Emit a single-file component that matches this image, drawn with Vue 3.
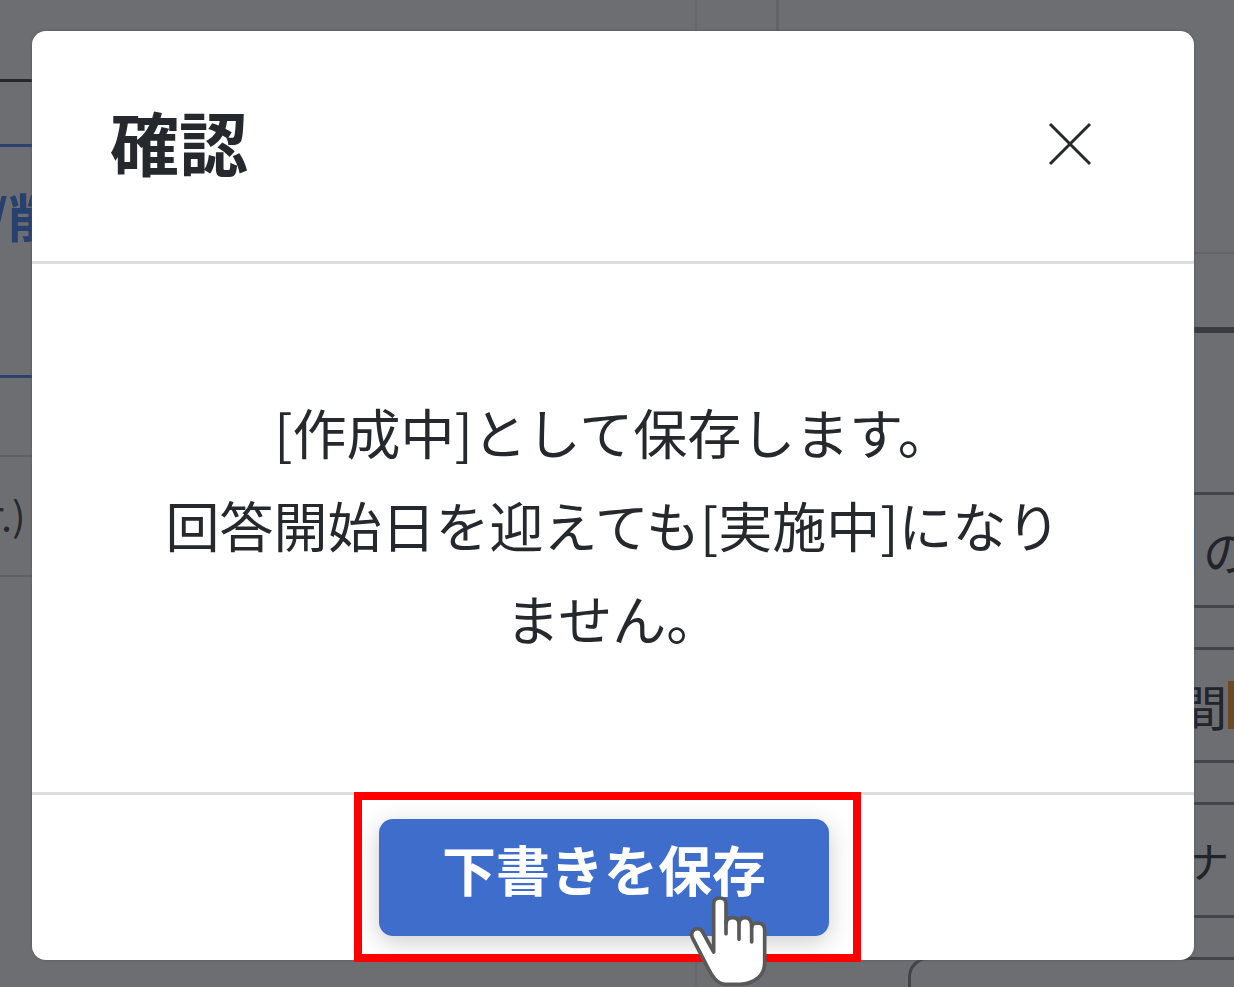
<script setup>
import { ref } from 'vue'

const open = ref(true)
const fields = [
  { id: 'f1', label: '項目1', value: 'の', kind: 'marked' },
  { id: 'f2', label: '項目2', value: '間', kind: 'inset' },
  { id: 'f3', label: '項目3', value: 'ナ', kind: 'small' },
  { id: 'f4', label: '項目4', value: '', kind: 'plain' },
]
</script>

<template>
  <div class="stage">
    <div class="backdrop" aria-hidden="true" inert>
      <div class="side">
        <div class="row row-top"></div>
        <div class="row row-tab"></div>
        <div class="row row-edit"><span>/削</span></div>
        <div class="row row-gap"></div>
        <div class="row row-note"><span>r.)</span></div>
      </div>
      <div class="gutter"></div>
      <div class="panel">
        <div class="panel-head"></div>
        <div class="panel-bar"></div>
        <div class="fields">
          <div v-for="f in fields" :key="f.id" class="field" :class="f.kind">
            <input :id="f.id" type="text" :value="f.value" :aria-label="f.label" readonly />
          </div>
        </div>
      </div>
    </div>

    <section v-if="open" class="dialog" role="dialog" aria-modal="true" aria-labelledby="dialog-title">
      <header class="dialog-head">
        <h1 id="dialog-title">確認</h1>
        <button class="close" type="button" aria-label="閉じる" @click="open = false">
          <svg viewBox="0 0 44 44" width="44" height="44">
            <path d="M2 2 42 42M42 2 2 42" fill="none" stroke="#25282c" stroke-width="3" />
          </svg>
        </button>
      </header>
      <div class="dialog-body">
        <p>[作成中]として保存します。<br />回答開始日を迎えても[実施中]になりません。</p>
      </div>
      <footer class="dialog-foot">
        <div class="action">
          <button class="save" type="button">下書きを保存</button>
          <div class="frame"></div>
          <svg class="pointer" viewBox="264 342 240 276" width="80" height="92" aria-hidden="true">
            <path
              d="M341 516V372Q341 354 359 354Q378 354 378 372V430Q379 413 398 413Q416 413 417 430Q418 413 436 413Q455 413 455 440Q458 429 475 429Q494 430 494 450V548Q494 576 474 594Q452 612 420 613H374Q357 611 344 596Q335 585 326 568L277 473Q271 455 284 448Q299 442 308 456Z"
              fill="#fff" stroke="#595959" stroke-width="11" stroke-linejoin="round" />
            <path d="M378 425V461M417 425V478M455 435V486" fill="none" stroke="#595959" stroke-width="11" stroke-linecap="round" />
          </svg>
        </div>
      </footer>
    </section>
  </div>
</template>

<style>
body {
  margin: 0;
  background: #6d6e72;
}
</style>

<style scoped>
* {
  box-sizing: border-box;
}

.stage {
  display: grid;
  grid-template: minmax(100vh, auto) / minmax(0, 1fr);
  overflow: hidden;
  background: #6d6e72;
  color: #25282c;
  font-family: "Noto Sans CJK JP", "Noto Sans", sans-serif;
}

.backdrop,
.dialog {
  grid-area: 1 / 1;
}

/* dimmed page behind the dialog */
.backdrop {
  display: grid;
  grid-template-columns: minmax(0, 1fr) 81px 458px;
  height: 100vh;
  overflow: hidden;
}

.row {
  display: flex;
  align-items: center;
  white-space: nowrap;
}

.row-top {
  height: 82px;
  border-bottom: 3px solid #25262a;
}

.row-tab {
  height: 65px;
  border-bottom: 3px solid #2b4170;
}

.row-edit {
  height: 231px;
  padding-bottom: 92px;
  border-bottom: 3px solid #2b4170;
  color: #27406f;
  font-size: 52px;
  font-weight: 700;
}

.row-edit span {
  margin-left: -12px;
}

.row-gap {
  height: 79px;
  border-bottom: 2px solid #5e5f63;
}

.row-note {
  height: 120px;
  padding-bottom: 4px;
  border-bottom: 2px solid #5e5f63;
  font-size: 40px;
}

.row-note span {
  margin-left: -12px;
}

.gutter {
  border-left: 2px solid #67686c;
}

.panel-head {
  height: 254px;
  border-bottom: 2px solid #646267;
  border-left: 3px solid #626267;
}

.panel-bar {
  height: 79px;
  border-bottom: 6px solid #3a3b40;
}

.fields {
  display: flex;
  flex-direction: column;
  gap: 39px;
  padding: 159px 0 0 132px;
}

.field {
  display: flex;
  align-items: center;
  height: 116px;
  margin-right: -40px;
  padding-left: 280px;
  border: 3px solid #434449;
  border-radius: 20px;
}

.field input {
  width: 100%;
  padding: 0;
  border: 0;
  background: transparent;
  color: #222429;
  font: 400 48px/60px "Noto Sans CJK JP", sans-serif;
}

.marked::before {
  flex: none;
  width: 4px;
  height: 44px;
  content: "";
  background: #4d7197;
}

.marked input {
  padding-left: 8px;
}

.inset {
  padding-left: 268px;
}

.inset::after {
  flex: none;
  width: 43px;
  height: 48px;
  content: "";
  background: #6b4a25;
}

.small {
  padding-left: 276px;
}

.small input {
  font-size: 42px;
}

/* dialog */
.dialog {
  z-index: 1;
  display: flex;
  flex-direction: column;
  margin: 31px 40px 27px 32px;
  border-radius: 14px;
  background: #fff;
  box-shadow: 0 0 3px #56575b;
}

.dialog-head {
  display: flex;
  align-items: flex-start;
  justify-content: space-between;
  height: 233px;
  padding: 60px 102px 0 78px;
  border-bottom: 3px solid #dcdee1;
}

.dialog-head h1 {
  margin: 0;
  font-size: 69px;
  font-weight: 700;
  line-height: 100px;
}

.close {
  display: grid;
  margin-top: 31px;
  padding: 0;
  border: 0;
  background: transparent;
  cursor: pointer;
}

.dialog-body {
  display: flex;
  flex: 1;
  align-items: center;
  justify-content: center;
  padding: 0 120px 8px;
}

.dialog-body p {
  margin: 0;
  font-size: 54px;
  line-height: 93px;
  text-align: center;
}

.dialog-foot {
  display: flex;
  justify-content: center;
  padding: 24px 18px 24px 0;
  border-top: 3px solid #dcdee1;
}

.action {
  position: relative;
}

.save {
  display: block;
  height: 117px;
  padding: 0 63px 18px;
  border: 0;
  border-radius: 14px;
  background: #3f6dcc;
  box-shadow: 0 6px 24px rgba(0, 0, 0, 0.2);
  color: #fff;
  font: 700 54px/80px "Noto Sans CJK JP", sans-serif;
  cursor: pointer;
}

.frame {
  position: absolute;
  inset: -27px -32px -26px -25px;
  border: 8px solid #f00;
  pointer-events: none;
}

.pointer {
  position: absolute;
  right: 61px;
  bottom: -50px;
  pointer-events: none;
}
</style>
